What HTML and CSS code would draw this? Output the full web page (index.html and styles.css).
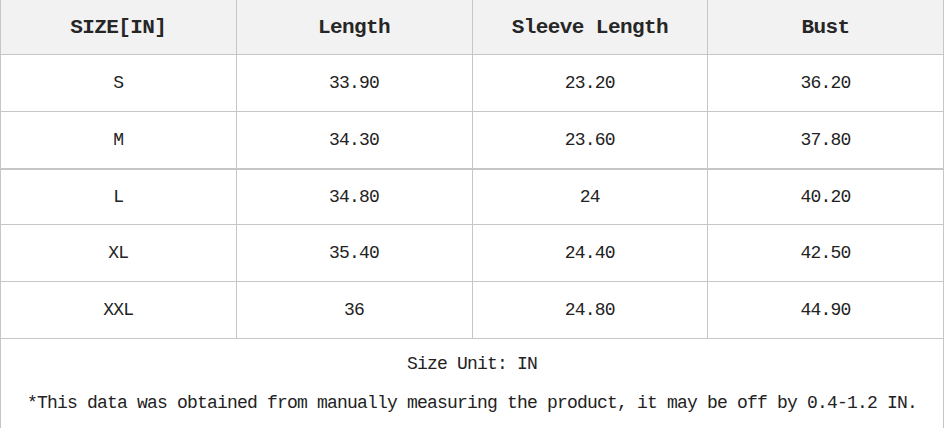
FILE: index.html
```html
<!DOCTYPE html>
<html>
<head>
<meta charset="utf-8">
<link rel="stylesheet" href="styles.css">
</head>
<body>
<table class="size-table">
  <thead>
    <tr class="head-row">
      <th>SIZE[IN]</th>
      <th>Length</th>
      <th>Sleeve Length</th>
      <th>Bust</th>
    </tr>
  </thead>
  <tbody>
    <tr class="row"><td>S</td><td>33.90</td><td>23.20</td><td>36.20</td></tr>
    <tr class="row row-split"><td>M</td><td>34.30</td><td>23.60</td><td>37.80</td></tr>
    <tr class="row row-short"><td>L</td><td>34.80</td><td>24</td><td>40.20</td></tr>
    <tr class="row"><td>XL</td><td>35.40</td><td>24.40</td><td>42.50</td></tr>
    <tr class="row"><td>XXL</td><td>36</td><td>24.80</td><td>44.90</td></tr>
    <tr class="note-row">
      <td colspan="4">
        <p class="note">Size Unit: IN</p>
        <p class="note">*This data was obtained from manually measuring the product, it may be off by 0.4-1.2 IN.</p>
      </td>
    </tr>
  </tbody>
</table>
</body>
</html>
```
FILE: styles.css
```css
html, body {
  margin: 0;
  padding: 0;
  background: #ffffff;
}
.size-table {
  width: 944px;
  border-collapse: collapse;
  table-layout: fixed;
  font-family: "Liberation Mono", "Courier New", monospace;
  color: #222222;
}
.size-table th,
.size-table td {
  border: 1px solid #c6c6c6;
  text-align: center;
  padding: 0;
}
.head-row th {
  border-top: none;
  height: 54px;
  background: #f2f2f2;
  font-size: 21px;
  letter-spacing: -0.6px;
  font-weight: bold;
  color: #262626;
}
.row td {
  height: 56px;
  font-size: 18px;
  letter-spacing: -0.8px;
}
.row-split td {
  border-bottom-width: 2px;
}
.row-short td {
  height: 54px;
}
.note-row td {
  height: 100px;
  vertical-align: top;
  border-bottom: none;
  font-size: 18px;
  letter-spacing: -0.8px;
}
.note {
  margin: 14px 0 0;
  line-height: 22px;
}
.note + .note {
  margin-top: 17px;
}
```
